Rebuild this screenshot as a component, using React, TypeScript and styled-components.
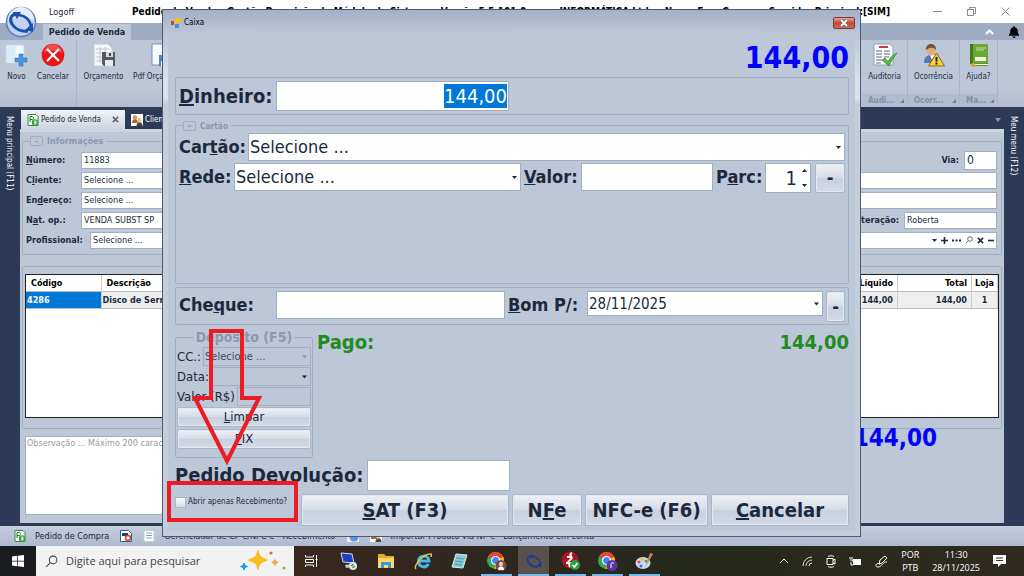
import React, { useEffect, useRef } from "react";
import styled, { createGlobalStyle, css } from "styled-components";
import { FaBell } from "react-icons/fa";

const ink = "#1b293e";
const face = "#bcc7d8";
const line = "#a1aec3";
const navy = "#2b3a57";

const Global = createGlobalStyle`
  * { box-sizing: border-box; }
  body { margin: 0; background: ${navy}; color: ${ink}; font: 10px/14px "DejaVu Sans Condensed", "DejaVu Sans", sans-serif; }
  button, input, select, textarea { font: inherit; color: inherit; margin: 0; border-radius: 0; }
  svg { display: block; flex: none; }
  u { text-underline-offset: 1px; }
`;

const Page = styled.div`
  position: relative;
  display: flex;
  flex-direction: column;
  min-height: 100vh;
  overflow: hidden;
`;

/* ---------- application chrome ---------- */
const TitleBar = styled.header`
  display: flex;
  align-items: center;
  height: 23px;
  padding-left: 49px;
  background: #fff;
`;
const Logoff = styled.button`
  width: 83px;
  padding: 0;
  border: 0;
  background: none;
  text-align: left;
  font-size: 9px;
`;
const AppTitle = styled.h1`
  margin: 0;
  flex: 1;
  display: flex;
  justify-content: space-between;
  min-width: 0;
  white-space: nowrap;
  color: #000;
  font-size: 10px;
  line-height: 16px;
`;
const WindowButtons = styled.div`
  display: flex;
  width: 134px;
  padding-left: 30px;
`;
const WinButton = styled.button`
  display: grid;
  place-items: center;
  width: 34px;
  height: 22px;
  padding: 0;
  border: 0;
  background: none;
  color: #8b8b8b;
`;
const Orb = styled.button`
  position: absolute;
  left: 5px;
  top: 6px;
  padding: 0;
  border: 0;
  background: none;
`;
const RibbonTabs = styled.nav`
  display: flex;
  align-items: flex-end;
  height: 17px;
  padding: 0 4px 0 43px;
  background: #9dabc3;
`;
const RibbonTab = styled.button`
  height: 16px;
  width: 88px;
  padding: 0;
  border: 0;
  background: ${face};
  font-weight: bold;
  font-size: 9px;
  white-space: nowrap;
`;
const TabTools = styled.div`
  display: flex;
  align-items: center;
  gap: 14px;
  height: 17px;
  margin-left: auto;
  color: #000;
`;
const Ribbon = styled.div`
  display: flex;
  justify-content: space-between;
  height: 67px;
  background: linear-gradient(${face} 0 50px, #b2bed1);
`;
const RibbonSide = styled.div`
  display: flex;
  &:last-child { padding-right: 26px; }
`;
const RibbonGroup = styled.div<{ $w: number }>`
  display: flex;
  flex-direction: column;
  justify-content: space-between;
  width: ${(p) => p.$w}px;
  border-right: 1px solid #a9b5c9;
`;
const Tools = styled.div`
  display: flex;
`;
const Tool = styled.button<{ $w: number }>`
  display: flex;
  flex-direction: column;
  align-items: center;
  gap: 4px;
  width: ${(p) => p.$w}px;
  padding: 3px 0 0;
  border: 0;
  background: none;
  font-size: 8px;
  line-height: 12px;
  white-space: nowrap;
`;
const GroupName = styled.div`
  display: flex;
  justify-content: space-between;
  align-items: center;
  height: 13px;
  padding: 0 3px 0 6px;
  background: #b0bcd0;
  color: #8391aa;
  font-size: 8px;
  font-weight: bold;
`;

/* ---------- work area ---------- */
const Work = styled.main`
  display: grid;
  grid-template-columns: 20px minmax(0, 1fr) 20px;
  flex: 1;
`;
const SideMenu = styled.button`
  writing-mode: vertical-rl;
  display: flex;
  align-items: center;
  padding: 9px 3px 0 0;
  border: 0;
  background: ${navy};
  color: #fff;
  font-size: 8px;
  white-space: nowrap;
`;
const Documents = styled.div`
  display: flex;
  flex-direction: column;
  padding: 3px 0 3px;
`;
const DocTabs = styled.div`
  display: flex;
  height: 19px;
  padding-left: 1px;
  color: #fff;
`;
const TabOverflow = styled.button`
  margin-left: auto;
  padding: 0 3px;
  border: 0;
  background: none;
`;
const DocTab = styled.button<{ $active?: boolean }>`
  display: flex;
  align-items: center;
  gap: 2px;
  width: 104px;
  padding: 0 6px;
  border: 0;
  background: none;
  font-size: 8px;
  white-space: nowrap;
  svg:last-child:not(:first-child) { margin-left: auto; }
  ${(p) => p.$active && css`background: linear-gradient(#f2f4f8, #ccd4e2); color: ${ink};`}
`;
const Sheet = styled.section`
  display: flex;
  flex-direction: column;
  flex: 1;
  padding: 2px 2px 4px;
  border-top: 3px solid #ccd4e2;
  background: ${face};
`;
const Group = styled.fieldset`
  min-width: 0;
  margin: 0;
  padding: 0;
  border: 1px solid ${line};
  border-radius: 2px;
`;
const Legend = styled.legend<{ $h: number }>`
  display: flex;
  align-items: center;
  gap: 4px;
  height: ${(p) => p.$h}px;
  margin-left: 4px;
  padding: 0 3px 0 0;
  color: #8a98b0;
  font-weight: bold;
  white-space: nowrap;
`;
const Collapse = styled.button`
  display: grid;
  place-items: center;
  width: 13px;
  height: 10px;
  padding: 0;
  border: 1px solid ${line};
  border-radius: 2px;
  background: ${face};
  line-height: 8px;
`;
const InfoGroup = styled(Group)`
  padding: 2px 4px 4px 3px;
  font-size: 9px;
`;
const InfoRow = styled.div<{ $wide?: boolean }>`
  display: grid;
  grid-template-columns: ${(p) => (p.$wide ? "64px" : "55px")} minmax(0, 1fr) auto;
  align-items: center;
  height: 20px;
`;
const FieldLabel = styled.label`
  font-weight: bold;
  white-space: nowrap;
`;
const Field = styled.input<{ $part?: "short" | "joined" }>`
  width: ${(p) => (p.$part === "short" ? "50%" : "100%")};
  min-width: 0;
  height: 17px;
  padding: 0 2px;
  border: 1px solid ${line};
  border-right-width: ${(p) => (p.$part === "joined" ? 0 : 1)}px;
  background: #fff;
`;
const Extra = styled.div<{ $w: number }>`
  display: flex;
  align-items: center;
  gap: 5px;
  padding-left: 12px;
  input { width: ${(p) => p.$w}px; }
`;
const NumberField = styled(Field)`
  font-size: 12px;
  height: 19px;
`;
const LookUp = styled.div`
  display: flex;
  align-items: center;
  gap: 4px;
  height: 17px;
  padding: 0 2px;
  border: 1px solid ${line};
  border-left: 0;
  background: #fff;
`;
const TableGroup = styled(Group)`
  flex: 1;
  display: flex;
  margin-top: 11px;
  padding: 7px 2px 10px;
`;
const TableFrame = styled.div`
  flex: 1;
  border: 1px solid #222;
  background: #fff;
`;
const Items = styled.table`
  width: 100%;
  border-collapse: collapse;
  table-layout: fixed;
  font-size: 9px;
  font-weight: bold;
  line-height: 14px;
  th, td { padding: 1px 4px; text-align: right; white-space: nowrap; border-right: 1px solid #ccc; }
  th { color: #000; }
  th:nth-child(-n+2), td:nth-child(-n+2) { text-align: left; }
  th:nth-child(-n+2) { padding-left: 5px; }
  td:nth-child(-n+2) { padding-left: 1px; }
  td { background: #efefef; border-bottom: 1px solid #bbb; border-top: 1px solid #bbb; }
  td:first-child { background: #0078d7; color: #fff; }
  th:last-child, td:last-child { text-align: center; padding: 1px 0; }
`;
const Foot = styled.div`
  display: flex;
  justify-content: space-between;
  height: 90px;
  padding: 7px 65px 0 3px;
`;
const Notes = styled.textarea`
  width: 400px;
  height: 79px;
  padding: 0 1px;
  border: 1px solid ${line};
  background: #fff;
  resize: none;
  font-size: 9px;
  line-height: 12px;
  &::placeholder { color: #9b9b9b; opacity: 1; }
`;
const GrandTotal = styled.output`
  color: #00f;
  font-size: 24px;
  font-weight: bold;
  line-height: 4px;
`;
const Shortcuts = styled.div`
  display: flex;
  align-items: center;
  gap: 11px;
  height: 20px;
  padding-left: 14px;
  background: linear-gradient(#c5cedd, #adb9cf);
  font-size: 9px;
  white-space: nowrap;
`;
const Shortcut = styled.button`
  display: flex;
  align-items: center;
  gap: 9px;
  padding: 0;
  border: 0;
  background: none;
`;

/* ---------- payment window ---------- */
const Dialog = styled.section`
  position: absolute;
  top: 9px;
  left: 162px;
  right: 163px;
  padding: 0 5px 5px;
  border: 1px solid #4c5a73;
  background: linear-gradient(#a3b0c8 0, #bac5d7 22px, #dbe1eb 70px, #dbe1eb 88px, #c3cddc 94px);
`;
const Caption = styled.header`
  display: flex;
  align-items: center;
  gap: 3px;
  height: 22px;
  margin: 0 -5px;
  padding: 3px 5px 0 8px;
  background: linear-gradient(#a3b0c8, #bac5d7);
  font-size: 8px;
  color: #000;
`;
const CloseButton = styled.button`
  display: grid;
  place-items: center;
  width: 22px;
  height: 12px;
  margin-left: auto;
  padding: 0;
  border: 1px solid #7c3b3b;
  border-radius: 2px;
  background: linear-gradient(#e0a79f, #c5493a 50%, #cf6b57);
`;
const Body = styled.div`
  padding: 0 6px 5px 7px;
  background: ${face};
`;
const Due = styled.output`
  display: block;
  height: 45px;
  color: #00f;
  font-size: 30px;
  font-weight: bold;
  line-height: 51px;
  text-align: right;
`;
const PayGroup = styled(Group)`
  height: 38px;
  padding: 3px;
`;
const CardGroup = styled(Group)`
  height: 165px;
  margin: 4px 0 3px;
  padding: 1px 3px;
`;
const Row = styled.div`
  display: flex;
  gap: 3px;
  margin-bottom: 2px;
`;
const Label = styled.label<{ $w: number }>`
  flex: none;
  width: ${(p) => p.$w}px;
  font-size: 18px;
  font-weight: bold;
  line-height: 28px;
  white-space: nowrap;
`;
const LargeLabel = styled(Label)`
  font-size: 20px;
  line-height: 31px;
`;
const Box = styled.input<{ $w?: number }>`
  flex: ${(p) => (p.$w ? "none" : "1")};
  width: ${(p) => (p.$w ? p.$w + "px" : "auto")};
  min-width: 0;
  height: 28px;
  padding: 0 2px;
  border: 1px solid ${line};
  background: #fff;
  font-size: 18px;
`;
const CashBox = styled(Box)`
  height: 30px;
  padding: 0 1px;
  font-size: 20px;
  text-align: right;
  outline: none;
  &::selection { background: #0078d7; color: #fff; }
`;
const ReturnBox = styled(Box)`
  height: 31px;
`;
const ComboFrame = styled.div<{ $w?: number }>`
  position: relative;
  flex: ${(p) => (p.$w ? "none" : "1")};
  width: ${(p) => (p.$w ? p.$w + "px" : "auto")};
  min-width: 0;
`;
const ComboArrow = styled.svg`
  position: absolute;
  right: 4px;
  top: 0;
  pointer-events: none;
`;
const ComboSelect = styled.select<{ $size: number; $h: number; $flat?: boolean }>`
  display: block;
  appearance: none;
  width: 100%;
  height: ${(p) => p.$h}px;
  padding: 0 1px;
  border: 1px solid ${line};
  background: ${(p) => (p.$flat ? "transparent" : "#fff")};
  color: ${(p) => (p.$flat ? "#3d4a60" : ink)};
  font-size: ${(p) => p.$size}px;
`;
const Spinner = styled.div`
  display: flex;
  align-items: center;
  width: 46px;
  height: 30px;
  margin-right: 1px;
  padding-right: 3px;
  border: 1px solid ${line};
  background: #fff;
`;
const SpinInput = styled.input`
  flex: 1;
  min-width: 0;
  height: 26px;
  padding: 0 5px 0 0;
  border: 0;
  background: none;
  font-size: 20px;
  text-align: right;
`;
const Push = styled.button<{ $w?: number; $h: number; $size: number; $bold?: boolean }>`
  flex: ${(p) => (p.$w ? "none" : "1")};
  width: ${(p) => (p.$w ? p.$w + "px" : "auto")};
  height: ${(p) => p.$h}px;
  padding: 0;
  border: 1px solid #aab6c9;
  border-radius: 2px;
  box-shadow: inset 0 0 0 1px #e3e7ef;
  background: linear-gradient(#eff1f5, #d5dbe6 50%, #c9d0de 51%, #d4dae6);
  font-size: ${(p) => p.$size}px;
  font-weight: ${(p) => (p.$bold ? "bold" : "normal")};
  line-height: 18px;
  white-space: nowrap;
`;
const Lower = styled.div`
  display: flex;
  gap: 4px;
  height: 135px;
  padding-top: 2px;
`;
const Deposit = styled(Group)`
  width: 138px;
  height: 131px;
  padding: 0 1px;
  font-size: 13px;
`;
const DepositLegend = styled(Legend)`
  margin: 0 auto;
  padding: 0 2px;
  font-size: 14px;
`;
const DepositRow = styled.div`
  display: flex;
  align-items: center;
  gap: 2px;
  height: 19px;
  margin-bottom: 1px;
`;
const DepositLabel = styled.label`
  white-space: nowrap;
`;
const DepositBox = styled(Box)`
  height: 19px;
  background: transparent;
`;
const DepositActions = styled.div`
  display: flex;
  flex-direction: column;
  gap: 2px;
`;
const Paid = styled.div`
  display: flex;
  flex: 1;
  justify-content: space-between;
  color: #228b22;
  font-size: 20px;
  font-weight: bold;
  line-height: 30px;
`;
const Actions = styled.div`
  display: flex;
  gap: 3px;
  padding-top: 3px;
`;
const OnlyReceive = styled.label`
  display: flex;
  gap: 2px;
  width: 123px;
  height: 16px;
  align-items: center;
  font-size: 8px;
  white-space: nowrap;
`;
const Tick = styled.input`
  appearance: none;
  width: 11px;
  height: 11px;
  border: 1px solid #aab6c9;
  background: linear-gradient(#fff, #d4dae6);
`;
const ReturnRow = styled(Row)`
  margin: 0;
`;

/* ---------- annotation ---------- */
const RedFrame = styled.div`
  position: absolute;
  left: 167px;
  top: 481px;
  width: 131px;
  height: 41px;
  border: 4px solid #ed1c24;
`;
const RedArrow = styled.svg`
  position: absolute;
  left: 190px;
  top: 326px;
`;

/* ---------- task bar ---------- */
const TaskBar = styled.footer`
  display: flex;
  height: 30px;
  background: linear-gradient(90deg, #1b1c20 0 30px, #38291f 300px, #2f2721 480px, #26291d 680px, #2f2a20 100%);
  color: #fff;
`;
const Start = styled.button`
  display: grid;
  place-items: center;
  width: 36px;
  padding: 0;
  border: 0;
  background: none;
`;
const SearchBox = styled.label`
  display: flex;
  align-items: center;
  gap: 8px;
  width: 258px;
  padding: 0 6px 0 9px;
  background: #f2f2f2;
  color: #444;
`;
const SearchInput = styled.input`
  flex: 1;
  min-width: 0;
  padding: 0;
  border: 0;
  background: none;
  font: 11px/16px "Open Sans", "Noto Sans", sans-serif;
  &::placeholder { color: #444; opacity: 1; }
`;
const TaskButton = styled.button<{ $run?: boolean; $active?: boolean }>`
  display: grid;
  place-items: center;
  width: 31px;
  margin-right: 6px;
  padding: 2px 0 0;
  border: 0;
  border-bottom: 2px solid ${(p) => (p.$run ? "#76b9ed" : "transparent")};
  background: ${(p) => (p.$active ? "#5a514d" : "none")};
`;
const Tray = styled.div`
  display: flex;
  align-items: center;
  gap: 13px;
  margin-left: auto;
  padding-right: 18px;
  font: 9px/13px "Open Sans", "Noto Sans", sans-serif;
  text-align: center;
`;
const TaskList = styled.div`
  display: flex;
  padding-left: 2px;
`;

/* ---------- drawings ---------- */
const Swirl = ({ size, color, orb }: { size: number; color: string; orb?: boolean }) => (
  <svg width={size} height={size} viewBox="0 0 32 32" fill="none">
    {orb && <circle cx="16" cy="16" r="14.500" fill="#c3d3f0" stroke="#5a7fc4" strokeWidth="1.500" />}
    {orb && <path d="M3 14a13 13 0 0 1 26 0c-8-4-18-4-26 0z" fill="#e6eefa" />}
    <path d="M11 8C6 9 4 13 7 18s9 8 16 7" stroke={color} strokeWidth="3" />
    <path d="M13 9c7 0 12 5 13 11" stroke={color} strokeWidth="2.500" />
    <path d="M8 6l8 0-4 7z" fill={color} />
    <path d="M28 17l0 9-8-2z" fill={color} />
  </svg>
);
const NewIcon = () => (
  <svg width="24" height="24" viewBox="0 0 24 24">
    <path d="M1 2h18v18H1z" fill="#f3f7fc" stroke="#c6d5e8" /><path d="M1.500 2.500h9v17h-9z" fill="#dce9f6" />
    <path d="M14 11h4v4h4v4h-4v4h-4v-4h-4v-4h4z" fill="#4b94dd" stroke="#2f75bd" strokeWidth=".6" />
  </svg>
);
const CancelIcon = () => (
  <svg width="24" height="24" viewBox="0 0 24 24">
    <circle cx="12" cy="12" r="11.300" fill="#e8151b" /><path d="M3 10a9 9 0 0 1 18 0c-5-3-13-3-18 0z" fill="#ff6a6a" opacity=".6" />
    <path d="M6 6l12 12M18 6L6 18" stroke="#fff" strokeWidth="2.200" />
  </svg>
);
const QuoteIcon = () => (
  <svg width="24" height="24" viewBox="0 0 24 24">
    <path d="M2 1h14l4 4v18H2z" fill="#f4f6f8" stroke="#c2cad4" /><path d="M4 6h13M4 10h13M4 14h10M4 18h8M8 4v16M13 4v16" stroke="#c1c9d2" />
    <path d="M10 9h13v14H12l-2-2z" fill="#555b63" /><path d="M14 9h7v5h-7z" fill="#d6dbe0" /><path d="M17 10h2v3h-2z" fill="#444" /><path d="M13 17h8v6h-8z" fill="#e6e9ec" />
  </svg>
);
const PdfIcon = () => (
  <svg width="24" height="24" viewBox="0 0 24 24"><path d="M4 1h12l4 4v17H4z" fill="#f7f9ff" stroke="#7b93bd" /><path d="M11 12h12v11H11z" fill="#4a86cf" /><path d="M14 12h6v4h-6zM13 18h8v5h-8z" fill="#eef" /></svg>
);
const AuditIcon = () => (
  <svg width="24" height="24" viewBox="0 0 24 24">
    <path d="M1 1h16l3 3v18H1z" fill="#fff" stroke="#8ba0bf" /><path d="M6 4h9" stroke="#d33a3a" strokeWidth="2" />
    <path d="M3 8h6M11 8h6M3 11h6M11 11h6M3 14h6M11 14h5M3 17h6M3 20h5" stroke="#556789" />
    <path d="M9 17l3-2 3 4c2-5 5-7 9-9-3 4-6 8-8 13z" fill="#52b83a" stroke="#2c8a20" strokeWidth=".7" />
  </svg>
);
const AlertIcon = () => (
  <svg width="24" height="24" viewBox="0 0 24 24">
    <path d="M2 20c0-7 4-8 8-8s7 2 8 8z" fill="#5579aa" /><path d="M8 12l2 5 3-5z" fill="#fff" />
    <ellipse cx="9" cy="7" rx="4.500" ry="5.500" fill="#e0aa7b" /><path d="M4 7c-1-8 11-8 10 0-2-3-6-3-10 0z" fill="#79513a" />
    <path d="M14.500 10l8 13h-16z" fill="#fbd13a" stroke="#8d6b0f" /><path d="M14.500 14v4.500M14.500 19.500v2" stroke="#222" strokeWidth="2" />
  </svg>
);
const BookIcon = () => (
  <svg width="24" height="24" viewBox="0 0 24 24">
    <path d="M3 1h18v20H3z" fill="#6aa834" /><path d="M3 1h3v20H3z" fill="#427a20" /><path d="M9 5h10M9 7h8" stroke="#c3e0a4" /><path d="M8 14h11v4H8z" fill="#f6eee2" />
    <path d="M4 20h17v3H4z" fill="#5b9430" /><path d="M5 21h16v1H5z" fill="#f7f2dc" /><circle cx="6" cy="22" r="2" fill="#f2a12c" />
  </svg>
);
const PageIcon = () => (
  <svg width="12" height="12" viewBox="0 0 12 12">
    <path d="M1 .5h8l2 2v9H1z" fill="#fff" stroke="#2f8a35" /><path d="M3 8V2.500h2c2 0 2 3 0 3H3" stroke="#1f7a26" fill="none" /><circle cx="8" cy="8.500" r="3.200" fill="#35a53b" /><path d="M7 7h2v3H7M7 8.500h2" stroke="#fff" strokeWidth=".8" fill="none" />
  </svg>
);
const PeopleIcon = () => (
  <svg width="12" height="12" viewBox="0 0 12 12"><path d="M0 0h12v12H0z" fill="#fff" /><circle cx="4" cy="3.500" r="2.300" fill="#d9954d" /><path d="M1 9c0-5 6-5 6 0z" fill="#b5622b" /><circle cx="8.500" cy="6" r="2" fill="#e9ba83" /><path d="M5.500 12c0-5 6-5 6 0z" fill="#444" /></svg>
);
const MagIcon = ({ size }: { size: number }) => (
  <svg width={size} height={size} viewBox="0 0 12 12" fill="none" stroke="currentColor"><circle cx="7.500" cy="4.500" r="3.500" /><path d="M5 7l-4 4" /></svg>
);
const Cross = ({ size, color }: { size: number; color: string }) => (
  <svg width={size} height={size} viewBox="0 0 8 8"><path d="M1 1l6 6M7 1L1 7" stroke={color} strokeWidth="1.800" /></svg>
);
const Grip = () => (
  <svg width="4" height="4" viewBox="0 0 5 5"><path d="M5 0v5H0z" fill="#71809a" /></svg>
);
const Chrome = ({ badge }: { badge: string }) => (
  <svg width="21" height="21" viewBox="0 0 21 21">
    <circle cx="9.500" cy="9.500" r="8.500" fill="#34a853" /><path d="M9.500 9.500L2 5.500a8.500 8.500 0 0 1 15.500 1z" fill="#ea4335" /><path d="M9.500 9.500L17.500 6c2 6-2 12-9 12z" fill="#fbbc05" />
    <circle cx="9.500" cy="9.500" r="4" fill="#4285f4" stroke="#fff" strokeWidth="1.200" /><circle cx="15" cy="14.500" r="5.500" fill={badge} />
    {badge === "#5b35a8" ? <path d="M14 17v-4.500c1-1 2-1 3 0" stroke="#fff" fill="none" /> : <g><circle cx="15" cy="13" r="2.200" fill="#f0c5a4" /><path d="M12 19c0-5 6-5 6 0z" fill="#fff" /></g>}
  </svg>
);

const Combo = ({ id, value, w, h, size, flat, dim }: { id: string; value: string; w?: number; h: number; size: number; flat?: boolean; dim?: boolean }) => (
  <ComboFrame $w={w}>
    <ComboSelect id={id} $h={h} $size={size} $flat={flat} defaultValue={value}>
      <option value={value}>{value}</option>
    </ComboSelect>
    <ComboArrow width="5" height={h} viewBox={`0 ${-h / 2} 5 ${h}`}><path d="M0-1h5L2.500 2z" fill={dim ? "#8a98b0" : ink} /></ComboArrow>
  </ComboFrame>
);

function PaymentDialog() {
  const cash = useRef<HTMLInputElement>(null);
  useEffect(() => {
    cash.current?.focus();
    cash.current?.select();
  }, []);
  return (
    <Dialog role="dialog" aria-label="Caixa">
      <Caption>
        <svg width="10" height="10" viewBox="0 0 10 10"><path d="M0 3h3v4H0z" fill="#d4432c" /><path d="M4 0h6v5H4z" fill="#f5bd22" /><path d="M4 6h4v4H4z" fill="#4b8be0" /></svg>
        Caixa
        <CloseButton aria-label="Fechar">
          <svg width="10" height="8" viewBox="0 0 10 8"><path d="M2 1l6 6M8 1L2 7" stroke="#555" strokeWidth="3" /><path d="M2 1l6 6M8 1L2 7" stroke="#fff" strokeWidth="1.800" /></svg>
        </CloseButton>
      </Caption>
      <Body>
        <Due>144,00</Due>
        <PayGroup>
          <Row>
            <LargeLabel $w={94} htmlFor="cash"><u>D</u>inheiro:</LargeLabel>
            <CashBox id="cash" ref={cash} $w={233} defaultValue="144,00" />
          </Row>
        </PayGroup>
        <CardGroup>
          <Legend $h={13}><Collapse aria-label="Recolher cartão">-</Collapse><small>Cartão</small></Legend>
          <Row>
            <Label $w={66} htmlFor="card">Car<u>t</u>ão:</Label>
            <Combo id="card" value="Selecione ..." h={28} size={18} />
          </Row>
          <Row>
            <Label $w={52} htmlFor="net"><u>R</u>ede:</Label>
            <Combo id="net" value="Selecione ..." h={28} size={18} />
            <Label $w={54} htmlFor="val"><u>V</u>alor:</Label>
            <Box id="val" $w={132} />
            <Label $w={46} htmlFor="parc">P<u>a</u>rc:</Label>
            <Spinner>
              <SpinInput id="parc" defaultValue="1" />
              <svg width="5" height="18" viewBox="0 0 5 18" fill={ink}><path d="M0 3l2.500-3L5 3zM0 15l2.500 3L5 15z" /></svg>
            </Spinner>
            <Push $w={30} $h={30} $size={18} $bold aria-label="Remover parcela">-</Push>
          </Row>
        </CardGroup>
        <PayGroup>
          <Row>
            <Label $w={94} htmlFor="cheque">Che<u>q</u>ue:</Label>
            <Box id="cheque" $w={229} />
            <Label $w={76} htmlFor="due"><u>B</u>om P/:</Label>
            <Combo id="due" value="28/11/2025" h={25} size={15} />
            <Push $w={19} $h={31} $size={18} $bold aria-label="Remover cheque">-</Push>
          </Row>
        </PayGroup>
        <Lower>
          <Deposit>
            <DepositLegend $h={20}>Depósito (F5)</DepositLegend>
            <DepositRow>
              <DepositLabel htmlFor="cc">CC.:</DepositLabel>
              <Combo id="cc" value="Selecione ..." h={19} size={11} flat dim />
            </DepositRow>
            <DepositRow>
              <DepositLabel htmlFor="date">Data:</DepositLabel>
              <Combo id="date" value="" h={19} size={11} flat />
            </DepositRow>
            <DepositRow>
              <DepositLabel htmlFor="amount">Valor (R$)</DepositLabel>
              <DepositBox id="amount" />
            </DepositRow>
            <DepositActions>
              <Push $w={134} $h={20} $size={13}><u>L</u>impar</Push>
              <Push $w={134} $h={20} $size={13}><u>P</u>IX</Push>
            </DepositActions>
          </Deposit>
          <Paid><span>Pago:</span><output>144,00</output></Paid>
        </Lower>
        <ReturnRow>
          <LargeLabel $w={189} htmlFor="ret">Ped<u>i</u>do Devolução:</LargeLabel>
          <ReturnBox id="ret" $w={143} />
        </ReturnRow>
        <Actions>
          <OnlyReceive><Tick type="checkbox" />Abrir apenas Recebimento?</OnlyReceive>
          <Push $h={32} $size={20} $bold><u>S</u>AT (F3)</Push>
          <Push $w={70} $h={32} $size={20} $bold>N<u>F</u>e</Push>
          <Push $w={123} $h={32} $size={20} $bold>NFC-e (F6)</Push>
          <Push $w={138} $h={32} $size={20} $bold><u>C</u>ancelar</Push>
        </Actions>
      </Body>
    </Dialog>
  );
}

export default function App() {
  return (
    <Page>
      <Global />
      <TitleBar>
        <Logoff>Logoff</Logoff>
        <AppTitle>
          <span>Pedido de Venda - Gestão Descrição do Módulo do Sistema - Versão 5.5.101.0 -</span>
          <span>INFORMÁTICA Ltda - Nome Emp Conexao Servidor Principal:[SIM]</span>
        </AppTitle>
        <WindowButtons>
          <WinButton aria-label="Minimizar"><svg width="9" height="9" viewBox="0 0 9 9"><path d="M0 4.500h9" stroke="currentColor" /></svg></WinButton>
          <WinButton aria-label="Restaurar"><svg width="9" height="9" viewBox="0 0 9 9" fill="none" stroke="currentColor"><path d="M.5 2.500h6v6h-6zM2.500 2.500v-2h6v6h-2" /></svg></WinButton>
          <WinButton aria-label="Fechar"><svg width="9" height="9" viewBox="0 0 9 9" stroke="currentColor"><path d="M.5.5l8 8M8.500.5l-8 8" /></svg></WinButton>
        </WindowButtons>
      </TitleBar>
      <RibbonTabs>
        <RibbonTab>Pedido de Venda</RibbonTab>
        <TabTools>
          <svg width="9" height="6" viewBox="0 0 9 6"><path d="M1 5l3.500-3.500L8 5" stroke="#fff" strokeWidth="2" fill="none" /></svg>
          <FaBell size={12} />
        </TabTools>
      </RibbonTabs>
      <Orb aria-label="Menu"><Swirl size={32} color="#1c4fae" orb /></Orb>
      <Ribbon>
        <RibbonSide>
          <RibbonGroup $w={77}>
            <Tools><Tool $w={33}><NewIcon />Novo</Tool><Tool $w={40}><CancelIcon />Cancelar</Tool></Tools>
          </RibbonGroup>
          <Tools><Tool $w={53}><QuoteIcon />Orçamento</Tool><Tool $w={60}><PdfIcon />Pdf Orçamento</Tool></Tools>
        </RibbonSide>
        <RibbonSide>
          <RibbonGroup $w={46}><Tools><Tool $w={45}><AuditIcon />Auditoria</Tool></Tools><GroupName>Audi...<Grip /></GroupName></RibbonGroup>
          <RibbonGroup $w={52}><Tools><Tool $w={51}><AlertIcon />Ocorrência</Tool></Tools><GroupName>Ocorr...<Grip /></GroupName></RibbonGroup>
          <RibbonGroup $w={38}><Tools><Tool $w={37}><BookIcon />Ajuda?</Tool></Tools><GroupName>Ma...<Grip /></GroupName></RibbonGroup>
        </RibbonSide>
      </Ribbon>
      <Work>
        <SideMenu>Menu principal (F11)</SideMenu>
        <Documents>
          <DocTabs>
            <DocTab $active><PageIcon />Pedido de Venda<Cross size={7} color="#59677e" /></DocTab>
            <DocTab><PeopleIcon />Clientes</DocTab>
            <TabOverflow aria-label="Mais abas"><svg width="6" height="4" viewBox="0 0 6 4"><path d="M0 0h6L3 4z" fill="#8797b3" /></svg></TabOverflow>
          </DocTabs>
          <Sheet>
            <InfoGroup>
              <Legend $h={14}><Collapse aria-label="Recolher informações">-</Collapse>Informações</Legend>
              <InfoRow>
                <FieldLabel htmlFor="num"><u>N</u>úmero:</FieldLabel><Field $part="short" id="num" defaultValue="11883" />
                <Extra $w={33}><FieldLabel htmlFor="via">Via:</FieldLabel><NumberField id="via" defaultValue="0" /></Extra>
              </InfoRow>
              <InfoRow><FieldLabel htmlFor="cli">C<u>l</u>iente:</FieldLabel><Field id="cli" defaultValue="Selecione ..." /></InfoRow>
              <InfoRow><FieldLabel htmlFor="end">En<u>d</u>ereço:</FieldLabel><Field id="end" defaultValue="Selecione ..." /></InfoRow>
              <InfoRow>
                <FieldLabel htmlFor="nat">N<u>a</u>t. op.:</FieldLabel><Field $part="short" id="nat" defaultValue="VENDA SUBST SP" />
                <Extra $w={93}><FieldLabel htmlFor="alt">Alteração:</FieldLabel><Field id="alt" defaultValue="Roberta" /></Extra>
              </InfoRow>
              <InfoRow $wide>
                <FieldLabel htmlFor="pro">Profissional:</FieldLabel><Field $part="joined" id="pro" defaultValue="Selecione ..." />
                <LookUp>
                  <svg width="5" height="3" viewBox="0 0 5 3"><path d="M0 0h5L2.500 3z" fill={ink} /></svg>
                  <svg width="7" height="7" viewBox="0 0 7 7"><path d="M0 3.500h7M3.500 0v7" stroke={ink} strokeWidth="1.600" /></svg>
                  <svg width="9" height="3" viewBox="0 0 9 3"><path d="M0 1.500h9" stroke={ink} strokeWidth="2" strokeDasharray="2 1.500" /></svg>
                  <MagIcon size={8} /><Cross size={7} color={ink} />
                  <svg width="6" height="3" viewBox="0 0 6 3"><path d="M0 1.500h6" stroke={ink} strokeWidth="1.600" /></svg>
                </LookUp>
              </InfoRow>
            </InfoGroup>
            <TableGroup>
              <TableFrame>
                <Items>
                  <colgroup><col width="75" /><col /><col width="120" /><col width="74" /><col width="26" /></colgroup>
                  <thead><tr><th>Código</th><th>Descrição</th><th>Líquido</th><th>Total</th><th>Loja</th></tr></thead>
                  <tbody><tr><td>4286</td><td>Disco de Serra</td><td>144,00</td><td>144,00</td><td>1</td></tr></tbody>
                </Items>
              </TableFrame>
            </TableGroup>
            <Foot>
              <Notes aria-label="Observação" placeholder="Observação ... Máximo 200 caracteres" />
              <GrandTotal>144,00</GrandTotal>
            </Foot>
          </Sheet>
        </Documents>
        <SideMenu>Meu menu (F12)</SideMenu>
      </Work>
      <Shortcuts>
        <Shortcut><PageIcon />Pedido de Compra</Shortcut>
        <Shortcut aria-label="Nota eletrônica"><svg width="12" height="12" viewBox="0 0 12 12"><path d="M.5.5h8l3 3v8H.5z" fill="#fff" stroke="#365f91" /><path d="M2 3h6v3H2z" fill="#263f66" /><circle cx="8" cy="8" r="2.500" fill="none" stroke="#d6402c" strokeWidth="1.500" /></svg></Shortcut>
        <Shortcut><svg width="12" height="12" viewBox="0 0 12 12"><path d="M1 .5h10v11H1z" fill="#fff" stroke="#c3cbd6" /><path d="M3 3h6M3 5.500h6M3 8h6" stroke="#83a5ca" /></svg>Gerenciador de CF-e/NFC-e - Recebimento</Shortcut>
        <Shortcut aria-label="Recebimento"><svg width="12" height="12" viewBox="0 0 12 12"><path d="M0 0h12v12H0z" fill="#e8eef8" /><circle cx="7" cy="7" r="4.500" fill="#5a96e8" /></svg></Shortcut>
        <Shortcut><PeopleIcon />Importar Produto via NF-e - Lançamento em conta</Shortcut>
      </Shortcuts>
      <TaskBar>
        <Start aria-label="Iniciar"><svg width="12" height="12" viewBox="0 0 12 12" fill="#fff"><path d="M0 1.500l5-.7v4.900H0zM5.700.7L12 0v5.700H5.700zM0 6.400h5v4.900l-5-.7zM5.700 6.400H12V12l-6.300-.8z" /></svg></Start>
        <SearchBox>
          <MagIcon size={13} />
          <SearchInput aria-label="Pesquisar" placeholder="Digite aqui para pesquisar" />
          <svg width="48" height="22" viewBox="0 0 48 22">
            <path d="M18 1c1 6 3 7 9 9-6 2-8 3-9 9-1-6-3-7-9-9 6-2 8-3 9-9z" fill="#fbbc1d" stroke="#fbbc1d" strokeWidth="1.500" strokeLinejoin="round" /><path d="M35 8c.6 3 1.500 3.500 4 4.500-2.500 1-3.400 1.500-4 4.500-.6-3-1.500-3.500-4-4.500 2.500-1 3.400-1.500 4-4.500z" fill="#f9a53a" />
            <path d="M4 13l1 2.500 2.500 1L5 17.500 4 20l-1-2.500-2.500-1 2.500-1z" fill="#1a9be6" stroke="#1a9be6" /><circle cx="31" cy="3" r="1.600" fill="#e8633a" /><circle cx="44" cy="18" r="1.600" fill="#7cc04b" />
          </svg>
        </SearchBox>
        <TaskList>
          <TaskButton aria-label="Visão de tarefas"><svg width="13" height="12" viewBox="0 0 13 12" fill="none" stroke="#fff"><path d="M.5 0v2h8V0M.5 4.500h8v3h-8zM.5 12v-2h8v2M11.500 0v12M10.500 4.500h2" /></svg></TaskButton>
          <TaskButton aria-label="Área remota"><svg width="19" height="19" viewBox="0 0 19 19"><path d="M2 1l11 1 2 9-11-1z" fill="#1e3fc4" stroke="#cfd8e8" /><path d="M6 13l7-1 2 3-8 1z" fill="#bfc8d3" /><circle cx="14" cy="14" r="4" fill="#dfe5e5" /><path d="M12 14l2-2v4l2-2" stroke="#388a3a" fill="none" /></svg></TaskButton>
          <TaskButton aria-label="Explorador"><svg width="18" height="16" viewBox="0 0 18 16"><path d="M1 1h6l2 2h8v12H1z" fill="#e9a82a" /><path d="M1 5h16v10H1z" fill="#ffd768" /><path d="M4 9h10v6h-3v-3H7v3H4z" fill="#3f97d5" /></svg></TaskButton>
          <TaskButton aria-label="Internet Explorer"><svg width="18" height="18" viewBox="0 0 18 18" fill="none"><path d="M14.500 12c-3 5-10 3-10-3s10-7 10.500 0H5" stroke="#45b8ee" strokeWidth="3" /><path d="M2 17c-3-3 8-16 15-15 1 1 0 2 0 3" stroke="#f2c230" strokeWidth="1.500" /></svg></TaskButton>
          <TaskButton aria-label="Bloco de notas"><svg width="17" height="17" viewBox="0 0 17 17"><path d="M5 1l11 1-4 13-11-1z" fill="#8ecbd6" stroke="#d7ecef" /><path d="M5 5l8 1M4 8l8 1M3 11l8 1" stroke="#4f98a8" /></svg></TaskButton>
          <TaskButton $run aria-label="Chrome"><Chrome badge="#7a4b4b" /></TaskButton>
          <TaskButton $run $active aria-label="Sistema"><Swirl size={20} color="#173f8f" /></TaskButton>
          <TaskButton $run aria-label="Antivírus"><svg width="20" height="20" viewBox="0 0 20 20"><circle cx="9" cy="9" r="8.500" fill="#a91522" /><path d="M11 2c-5 2 3 4-2 7s2 4-1 7M6 6h4M10 12h-5" stroke="#fff" strokeWidth="2" fill="none" /><circle cx="14" cy="14" r="5" fill="#27a343" /><path d="M11.500 14l2 2 3-4" stroke="#fff" strokeWidth="1.500" fill="none" /></svg></TaskButton>
          <TaskButton $run aria-label="Chrome perfil"><Chrome badge="#5b35a8" /></TaskButton>
          <TaskButton $run aria-label="Paint"><svg width="19" height="19" viewBox="0 0 19 19"><ellipse cx="8" cy="11" rx="7.500" ry="6" fill="#c9dff0" /><circle cx="4" cy="10" r="1.500" fill="#e14b3c" /><circle cx="7" cy="7.500" r="1.500" fill="#f1b72c" /><circle cx="11" cy="9" r="1.500" fill="#4aa54a" /><circle cx="6" cy="14" r="1.500" fill="#3d6dc7" /><path d="M10 16l5-15 3 1z" fill="#c98b4a" /></svg></TaskButton>
        </TaskList>
        <Tray>
          <svg width="10" height="6" viewBox="0 0 10 6" fill="none" stroke="#fff"><path d="M1 5l4-4 4 4" /></svg>
          <svg width="11" height="11" viewBox="0 0 11 11" fill="none" stroke="#ddd"><path d="M1 10a9 9 0 0 1 9-9M4 10a6 6 0 0 1 6-6M7 10a3 3 0 0 1 3-3" /></svg>
          <svg width="10" height="13" viewBox="0 0 10 13" fill="none" stroke="#fff"><path d="M1 3.500h6v6H1zM7 5l2-1v5L7 8M2 1.500c2-1 4-1 6 0M2 11.500c2 1 4 1 6 0" /></svg>
          <svg width="13" height="9" viewBox="0 0 13 9" fill="#fff"><path d="M4 2h8v6H4z" /><path d="M0 1h4M1 3h3v2M2 5v3h2" stroke="#fff" fill="none" /></svg>
          <svg width="13" height="13" viewBox="0 0 13 13" fill="none" stroke="#fff"><path d="M4 9l1-4 5-4 2 2-5 5zM5 9c-4-2-6 3-2 3s5-6 9-5" /></svg>
          <span>POR<br />PTB</span>
          <span>11:30<br />28/11/2025</span>
          <svg width="13" height="12" viewBox="0 0 13 12"><path d="M0 0h13v9H8l-3 3V9H0z" fill="#fff" /><path d="M3 3h7M3 5.500h7" stroke="#333" /></svg>
        </Tray>
      </TaskBar>
      <PaymentDialog />
      <RedArrow width="72" height="142" viewBox="0 0 72 142" fill="none" stroke="#ed1c24" strokeWidth="4"><path d="M21 5h31v67h17L37 135 5 72h16z" /></RedArrow>
      <RedFrame />
    </Page>
  );
}
